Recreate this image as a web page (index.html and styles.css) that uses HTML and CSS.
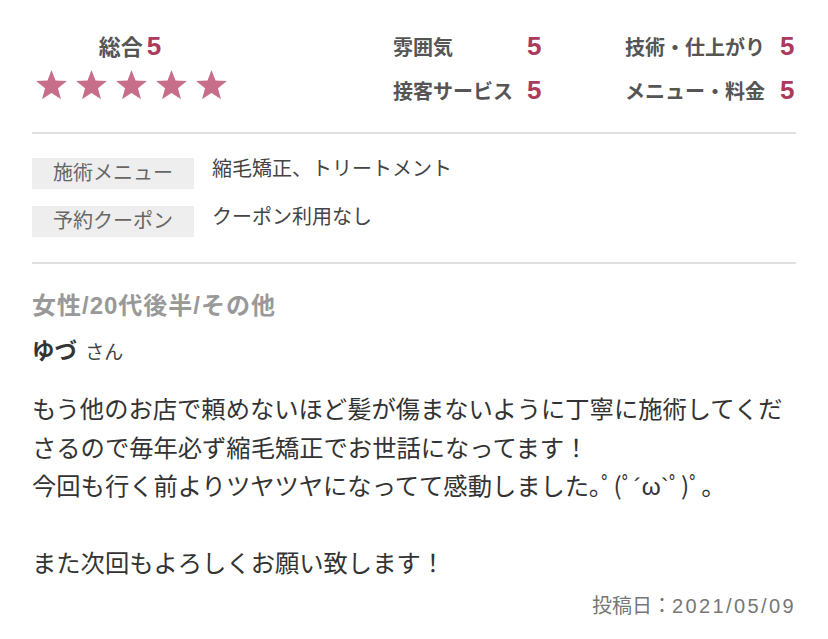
FILE: index.html
```html
<!DOCTYPE html>
<html lang="ja">
<head>
  <meta charset="utf-8">
  <title>口コミ</title>
  <link rel="stylesheet" href="styles.css">
</head>
<body>
  <div class="review">
    <div class="summary">
      <div class="overall">
        <div class="overall-title">総合<span class="score">5</span></div>
        <div class="stars">
          <svg class="star" viewBox="0 0 24 23"><polygon points="12,0.5 14.9,8.2 23.2,8.6 16.7,13.8 18.9,21.9 12,17.3 5.1,21.9 7.3,13.8 0.8,8.6 9.1,8.2"/></svg>
          <svg class="star" viewBox="0 0 24 23"><polygon points="12,0.5 14.9,8.2 23.2,8.6 16.7,13.8 18.9,21.9 12,17.3 5.1,21.9 7.3,13.8 0.8,8.6 9.1,8.2"/></svg>
          <svg class="star" viewBox="0 0 24 23"><polygon points="12,0.5 14.9,8.2 23.2,8.6 16.7,13.8 18.9,21.9 12,17.3 5.1,21.9 7.3,13.8 0.8,8.6 9.1,8.2"/></svg>
          <svg class="star" viewBox="0 0 24 23"><polygon points="12,0.5 14.9,8.2 23.2,8.6 16.7,13.8 18.9,21.9 12,17.3 5.1,21.9 7.3,13.8 0.8,8.6 9.1,8.2"/></svg>
          <svg class="star" viewBox="0 0 24 23"><polygon points="12,0.5 14.9,8.2 23.2,8.6 16.7,13.8 18.9,21.9 12,17.3 5.1,21.9 7.3,13.8 0.8,8.6 9.1,8.2"/></svg>
        </div>
      </div>
      <div class="ratings">
        <span class="rating-label">雰囲気</span><span class="score">5</span>
        <span class="rating-label">技術・仕上がり</span><span class="score">5</span>
        <span class="rating-label">接客サービス</span><span class="score">5</span>
        <span class="rating-label">メニュー・料金</span><span class="score">5</span>
      </div>
    </div>

    <div class="details">
      <div class="detail-row">
        <span class="tag">施術メニュー</span>
        <span class="detail-value">縮毛矯正、トリートメント</span>
      </div>
      <div class="detail-row">
        <span class="tag">予約クーポン</span>
        <span class="detail-value">クーポン利用なし</span>
      </div>
    </div>

    <div class="comment">
      <div class="reviewer">女性/20代後半/その他</div>
      <div class="name">ゆづ <span class="honorific">さん</span></div>
      <p class="body-text">もう他のお店で頼めないほど髪が傷まないように丁寧に施術してくださるので毎年必ず縮毛矯正でお世話になってます！<br>今回も行く前よりツヤツヤになってて感動しました｡ﾟ(ﾟ´ω`ﾟ)ﾟ｡<br><br>また次回もよろしくお願い致します！</p>
      <div class="posted">投稿日：<span class="posted-date">2021/05/09</span></div>
    </div>
  </div>
</body>
</html>
```

FILE: styles.css
```css
body {
  margin: 0;
  background-color: #fff;
  font-family: "Liberation Sans", "Noto Sans CJK JP", sans-serif;
  color: #333;
}

.review {
  padding: 0 32px;
}

.summary {
  display: flex;
  justify-content: space-between;
  padding: 24px 0 20px;
  border-bottom: 2px solid #e0e0e0;
}

.overall {
  width: 196px;
  text-align: center;
}

.overall-title {
  height: 44px;
  line-height: 44px;
  font-size: 22px;
  font-weight: bold;
  color: #555;
}

.overall-title .score {
  margin-left: 4px;
}

.score {
  font-size: 26px;
  font-weight: bold;
  color: #ab3a5c;
}

.stars {
  display: flex;
  gap: 7px;
  margin-top: 1px;
  padding-left: 3px;
}

.star {
  width: 33px;
  height: 32px;
  fill: #c76f8a;
}

.ratings {
  display: grid;
  grid-template-columns: 134px 98px 155px 16px;
  grid-auto-rows: 44px;
  align-items: center;
  align-content: start;
}

.rating-label {
  font-size: 20px;
  font-weight: bold;
  color: #555;
}

.details {
  display: flex;
  flex-direction: column;
  gap: 17px;
  padding: 24px 0 25px;
  border-bottom: 2px solid #e0e0e0;
}

.detail-row {
  display: flex;
  align-items: flex-start;
  gap: 18px;
}

.tag {
  width: 162px;
  height: 31px;
  line-height: 31px;
  background-color: #eee;
  text-align: center;
  font-size: 20px;
  color: #666;
}

.detail-value {
  line-height: 23px;
  font-size: 20px;
  color: #444;
}

.comment {
  padding-top: 27px;
}

.reviewer {
  line-height: 30px;
  font-size: 24px;
  font-weight: bold;
  letter-spacing: 1px;
  color: #999;
}

.name {
  margin-top: 16px;
  line-height: 30px;
  font-size: 22.5px;
  font-weight: bold;
  color: #333;
}

.honorific {
  margin-left: 2px;
  font-size: 19px;
  font-weight: normal;
  color: #444;
}

.body-text {
  margin: 23px 0 0;
  line-height: 38.5px;
  font-size: 24.3px;
  color: #333;
}

.posted {
  margin-top: 7px;
  line-height: 30px;
  text-align: right;
  font-size: 20px;
  color: #777;
}

.posted-date {
  letter-spacing: 2.4px;
}
```
